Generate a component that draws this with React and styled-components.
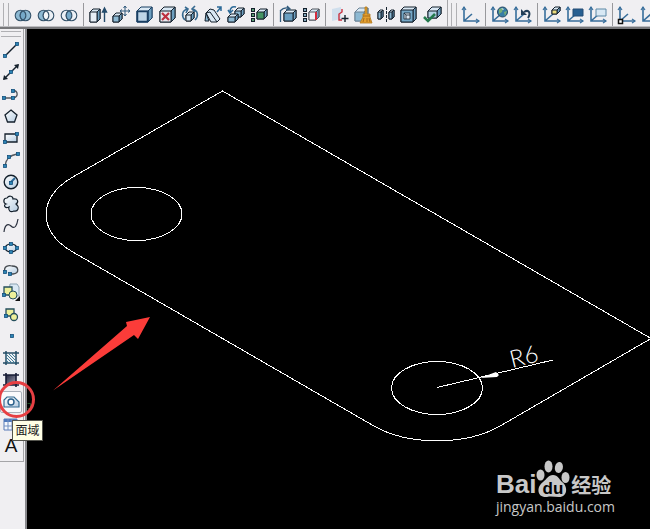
import React from 'react'
import styled, { createGlobalStyle } from 'styled-components'

const ink = '#14202c'
const blue = '#2c6a98'
const steel = '#8db9d3'
const pale = '#d9e8f4'
const yellow = '#eef09a'

const Box = ({ x, y, w = 9, h = 9, d = 4, front = steel, line = ink }) => (
    <g stroke={line} strokeWidth="1" strokeLinejoin="round">
        <path d={`M${x} ${y + d}l${d}-${d}h${w}v${h}l-${d} ${d}h-${w}z`} fill={pale} />
        <path d={`M${x + w} ${y + d}l${d}-${d}v${h}l-${d} ${d}z`} fill="#6d9fc0" />
        <path d={`M${x} ${y + d}h${w}v${h}h-${w}z`} fill={front} />
    </g>
)

const Dot = ({ x, y }) => <rect x={x - 1.5} y={y - 1.5} width="3" height="3" fill="#2d84b4" stroke="#14507c" strokeWidth=".8" />

const Axes = ({ x = 3, y = 16 }) => (
    <g fill="none" stroke="#386e9b" strokeWidth="1.6">
        <path d={`M${x} 2V${y}H18M${x} ${y}l8-7`} />
        <path d={`M${x - 2} 5l2-3 2 3M15 ${y - 2}l3 2-3 2`} strokeWidth="1.2" />
    </g>
)

const Squares = ({ color }) => (
    <g fill={color} stroke={ink}>
        <rect x="2.5" y="3.5" width="3" height="3" />
        <rect x="2.5" y="8.5" width="3" height="3" />
        <rect x="2.5" y="13.5" width="3" height="3" />
    </g>
)

const Rings = ({ left, right, middle }) => (
    <g stroke="#35536b" strokeWidth="1.1">
        <circle cx="7.5" cy="10.5" r="5.3" fill={left} />
        <circle cx="12.5" cy="10.5" r="5.3" fill={right} />
        <path d="M10 5.8a5.3 5.3 0 0 1 0 9.4a5.3 5.3 0 0 1 0-9.4z" fill={middle} />
    </g>
)

const icons = {
    union: <Rings left={steel} right={steel} middle="#75a9c9" />,
    subtract: <Rings left={steel} right="#edf1f6" middle="#f4f7fa" />,
    intersect: <Rings left="#edf1f6" right="#edf1f6" middle="#75a9c9" />,
    extrude: <><Box x={2} y={4} w={7} h={10} d={3} front="#e6eef6" /><path d="M16.5 17V4M14.5 7l2-4 2 4z" fill={blue} stroke="#244b6b" strokeWidth="1.4" /></>,
    moveFaces: <><Box x={2} y={8} w={6} h={6} d={3} /><path d="M14 1v10M9 6h10M12.5 3L14 1l1.5 2M12.5 9l1.5 2 1.5-2M11 4.5L9 6l2 1.5M17 4.5L19 6l-2 1.5" fill="none" stroke="#315b7d" /></>,
    offset: <><Box x={3} y={2} w={11} h={11} d={4} front="#386b91" line="#193f63" /><path d="M3.5 6.5h10v10h-10z" fill="#bed6e8" stroke="#193f63" strokeWidth="1.5" /></>,
    remove: <><Box x={3} y={2} w={11} h={11} d={4} front="#e7e9ef" /><path d="M5 8l7 7M12 8l-7 7" stroke="#bd2f3f" strokeWidth="2.2" /></>,
    rotate: <><Box x={6} y={7} w={5} h={6} d={3} front={pale} /><path d="M5 15C1 11 2 5 8 4M5 2l3 2-2 4M15 15c4-4 3-10-3-11M15 1l-3 3 3 3" fill="none" stroke="#386b91" strokeWidth="1.6" /></>,
    taper: <><path d="M3 8l4-4 4 1 6 9-3 3h-6z" fill={pale} stroke={ink} /><path d="M3 8l4-1 7 10" fill="none" stroke={ink} /><path d="M3 8l3 8H2z" fill={steel} stroke={ink} /><path d="M14 7l4-5M14 2h4v4" fill="none" stroke={blue} strokeWidth="1.5" /></>,
    copyFaces: <><Box x={9} y={3} w={6} h={6} d={3} /><Box x={2} y={9} w={7} h={5} d={3} /><path d="M10 2C6 1 4 3 4 7M2 5l2 3 3-3" fill="none" stroke={blue} strokeWidth="1.5" /></>,
    colorFaces: <><Squares color="#5a9e72" /><Box x={8} y={4} w={7} h={7} d={3} front="#449463" /></>,
    copyEdges: <><Box x={6} y={5} w={9} h={8} d={3} front="#6a9fc1" /><path d="M2.5 17V5M2 6q5-5 10-2M9 1l3 3-4 1" fill="none" stroke="#315b7d" strokeWidth="1.3" /></>,
    colorEdges: <><Squares color="#83a8bd" /><Box x={8} y={4} w={7} h={8} d={3} front="#eef0f5" line="#51545d" /><path d="M15 7v8" stroke="#d52b3d" strokeWidth="2" /></>,
    imprint: <><path d="M2 4l9-2v12l-9 2z" fill="#d0dfed" /><path d="M12 4v3l-3 2v6h3" fill="none" stroke="#c9303f" strokeWidth="1.4" /><path d="M15 10v7M11.5 13.5h7" stroke={ink} strokeWidth="1.4" /></>,
    clean: <><Box x={2} y={3} w={9} h={9} d={4} line="#6b8295" /><path d="M12 2h2v7h3v3l2 6H7l3-6V9h2z" fill="#e4a02f" stroke="#b07820" strokeWidth=".8" /><path d="M10 11h7M11 13l-1 4M14 13v4M16 13l1 4" stroke="#996018" strokeWidth=".8" /></>,
    separate: <><Box x={2} y={5} w={3} h={7} d={2} /><Box x={13} y={5} w={3} h={7} d={2} /><path d="M10.5 2v16" stroke={ink} strokeDasharray="3 1" /></>,
    shell: <><Box x={2} y={2} w={12} h={12} d={3} front="#75a7c6" /><path d="M5 8h6v6H5zM5 8l2 2v4M7 10h4" fill={pale} stroke={ink} strokeWidth=".8" /></>,
    check: <><Box x={6} y={2} w={9} h={7} d={4} front="#b4d2e3" /><path d="M2 12l4 4 7-7" fill="none" stroke="#24794d" strokeWidth="2.6" /></>,
    ucs: <Axes />,
    world: <><Axes /><circle cx="12.5" cy="7" r="5" fill="#377da5" stroke="#254863" /><path d="M9 4l4-1-1 4-3 2zM14 7l3-1-2 5z" fill="#78ae74" /><path d="M11 3l3 1-1 1z" fill="#e4f1f5" /></>,
    previous: <><Axes /><path d="M15 13c3-5 1-9-4-6" fill="none" stroke="#223e58" strokeWidth="2" /><path d="M8 4v6h6z" fill="#223e58" /></>,
    face: <><Axes /><Box x={10} y={2} w={5} h={4} d={3} front="#e9dc7e" /></>,
    object: <><Axes /><path d="M8 4h10v7H8z" fill="#285f91" stroke="#244d74" /></>,
    view: <><Axes /><path d="M8 4h10v7H8z" fill="#d8e8f4" stroke="#5d88a6" /></>,
    origin: <><Axes /><path d="M1.5 14.5h4v4h-4z" fill="#fff" stroke="#111" strokeWidth="1.5" /></>,
    line: <><path d="M4 16L16 4" stroke={ink} strokeWidth="1.4" /><Dot x={4} y={16} /><Dot x={16} y={4} /></>,
    xline: <><path d="M3 17L17 3" stroke={ink} strokeWidth="1.4" /><path d="M2 18l1-5 4 4zM18 2l-5 1 4 4z" fill={ink} /><Dot x={10} y={10} /></>,
    polyline: <><path d="M3 14h9q5-1 4-5-1-3-4-2" fill="none" stroke="#53585f" strokeWidth="1.4" /><Dot x={3} y={14} /><Dot x={12} y={14} /><Dot x={12} y={7} /></>,
    polygon: <path d="M10 4l6 5-2.5 7h-7L4 9z" fill="url(#shade)" stroke={ink} strokeWidth="1.3" />,
    rectangle: <><path d="M4 6h12v8H4z" fill="url(#shade)" stroke={ink} strokeWidth="1.3" /><Dot x={4} y={14} /><Dot x={16} y={6} /></>,
    arc: <><path d="M4 16Q5 6 16 4" fill="none" stroke="#53585f" strokeWidth="1.4" /><Dot x={4} y={16} /><Dot x={8} y={7} /><Dot x={17} y={4} /></>,
    circle: <><circle cx="10" cy="10" r="6.8" fill="url(#shade)" stroke={ink} strokeWidth="1.4" /><path d="M10 10l4-4" stroke={blue} strokeWidth="2" /><Dot x={10} y={11} /></>,
    cloud: <path d="M5 10C2 9 2 4 6 4C8 1 12 2 12 5C17 4 18 8 15 10C19 13 17 18 13 17C9 19 7 16 8 13C4 15 2 11 5 10z" fill="url(#shade)" stroke={ink} strokeWidth="1.2" />,
    spline: <path d="M3 16C4 7 8 8 10 10C14 14 16 9 17 3" fill="none" stroke="#292f3d" strokeWidth="1.2" />,
    ellipse: <><ellipse cx="10" cy="10" rx="6" ry="4" fill="url(#shade)" stroke={ink} strokeWidth="1.2" /><Dot x={4} y={10} /><Dot x={16} y={10} /><Dot x={10} y={6} /><Dot x={10} y={14} /></>,
    ellipseArc: <><path d="M4 12C2 6 8 5 11 6C18 6 19 13 12 14H9" fill="url(#shade)" stroke="#454a50" strokeWidth="1.3" /><Dot x={4} y={12} /><Dot x={9} y={14} /></>,
    insert: <><path d="M9 2h7l2 3v9H8z" fill={pale} stroke="#8ba2b2" /><path d="M3 5h8v8H3z" fill={yellow} stroke="#244e5c" strokeWidth="1.3" /><circle cx="12" cy="13" r="4" fill={yellow} stroke="#244e5c" /><Dot x={3} y={13} /><path d="M19 14v5h-5z" fill="#111" /></>,
    block: <><path d="M5 5h8v7H5z" fill={yellow} stroke="#244e5c" strokeWidth="1.3" /><circle cx="13" cy="13" r="3.5" fill={yellow} stroke="#244e5c" strokeWidth="1.3" /><Dot x={5} y={12} /></>,
    point: <Dot x={11} y={10} />,
    hatch: <><path d="M5 3v14M15 3v14M2 5h16M2 15h16" stroke="#244e67" strokeWidth="1.5" /><path d="M5 6l9 9M8 6l6 6M5 9l6 6M5 12l3 3M11 6l3 3" stroke="#3e809c" /></>,
    gradient: <><path d="M5 5h10v10H5z" fill="url(#dark)" /><path d="M5 3v14M15 3v14M2 5h16M2 15h16" stroke="#171c35" strokeWidth="1.6" /></>,
    region: <><path d="M3 15V8l3-3h7l5 5v5z" fill="url(#shade)" stroke="#326b91" strokeWidth="1.2" /><circle cx="10" cy="10" r="3" fill="#fff" stroke="#285e89" strokeWidth="1.4" /></>,
    table: <><path d="M3 5h13v11H3z" fill="#f5f8fd" stroke="#587bb7" /><path d="M3 5h13v3H3z" fill="#507abc" /><path d="M7 5v11M11 5v11M3 12h13" stroke="#7291c2" /></>,
}

const modify = [
    ['union', 'subtract', 'intersect'],
    ['extrude', 'moveFaces', 'offset', 'remove', 'rotate', 'taper', 'copyFaces', 'colorFaces'],
    ['copyEdges', 'colorEdges'],
    ['imprint', 'clean', 'separate', 'shell', 'check'],
]
const ucs = [['ucs'], ['world', 'previous'], ['face', 'object', 'view'], ['origin', 'ucs']]
const drawTools = ['line', 'xline', 'polyline', 'polygon', 'rectangle', 'arc', 'circle', 'cloud', 'spline', 'ellipse', 'ellipseArc', 'insert', 'block', 'point', 'hatch', 'gradient', 'region', 'table']

const Icon = ({ name }) => <Glyph width="20" height="20" viewBox="0 0 20 20" aria-hidden="true">{icons[name]}</Glyph>

const ToolGroups = ({ groups }) => groups.map((group, i) => (
    <Group key={i} $divided={i > 0}>
        {group.map(name => <ToolButton key={name} type="button" aria-label={name}><Icon name={name} /></ToolButton>)}
    </Group>
))

function Drawing() {
    return (
        <Sheet viewBox="27 29 623 500" preserveAspectRatio="xMinYMin slice">
            <g fill="none" stroke="#fff" shapeRendering="crispEdges">
                <path d="M222.5 91L72 177.500A91 53 0 0 0 72 251.500L373 425.500A91 53 0 0 0 501 425.500L651 338.500Z" />
                <ellipse cx="136.5" cy="214" rx="45.5" ry="26.5" />
                <ellipse cx="437" cy="388" rx="45.5" ry="26.5" />
                <path d="M437 387.500L553 360" />
            </g>
            <path d="M27.5 403.500h3v5h-3" fill="none" stroke="#1c4a22" />
            <path d="M480 378l16-6 3 3-2 2z" fill="#fff" />
            <DimText x="512" y="368" transform="rotate(-14 512 368)">R6</DimText>
            <path d="M53 390.500L127 326l-1-4 24-5-12 22-4-4z" fill="#fb3c39" />
        </Sheet>
    )
}

function Watermark() {
    return (
        <Mark>
            <Brand>
                <BrandName>Bai</BrandName>
                <svg width="34" height="38" viewBox="0 0 34 38">
                    <g fill="#c8c8c8">
                        <ellipse cx="4.5" cy="15" rx="4" ry="5.5" />
                        <ellipse cx="12.5" cy="6.5" rx="4" ry="6" />
                        <ellipse cx="23" cy="7.5" rx="4" ry="5.5" transform="rotate(12 23 7)" />
                        <ellipse cx="29.5" cy="17.5" rx="4" ry="5.5" />
                        <path d="M17 15c5 0 6 4 9 7c6 4 6 15-3 15c-4 0-8-1-12 0C1 38 0 27 7 22c4-3 5-7 10-7z" />
                    </g>
                    <PawText x="17" y="34" textAnchor="middle">du</PawText>
                </svg>
                <BrandCjk>经验</BrandCjk>
            </Brand>
            <Site>jingyan.baidu.com</Site>
        </Mark>
    )
}

function App() {
    return (
        <Window>
            <GlobalStyle />
            <Defs width="0" height="0" aria-hidden="true">
                <linearGradient id="shade" x2="1" y2="1"><stop stopColor="#fff" /><stop offset="1" stopColor="#b5cce1" /></linearGradient>
                <linearGradient id="dark" x2="1" y2="1"><stop stopColor="#22233c" /><stop offset="1" stopColor="#a3a5b5" /></linearGradient>
            </Defs>
            <TopBar>
                <ToolStrip><Grip /><ToolGroups groups={modify} /></ToolStrip>
                <ToolStrip><Grip /><ToolGroups groups={ucs} /></ToolStrip>
            </TopBar>
            <Body>
                <SideBar>
                    <SideTools>
                        <Grip $flat />
                        {drawTools.map(name => (
                            <SideButton key={name} type="button" aria-label={name} $active={name === 'region'}>
                                <Icon name={name} />
                                {name === 'region' && <>
                                    <Highlight />
                                    <Tip role="tooltip">面域</Tip>
                                </>}
                            </SideButton>
                        ))}
                        <SideButton type="button">A</SideButton>
                    </SideTools>
                </SideBar>
                <Canvas>
                    <Drawing />
                    <Watermark />
                </Canvas>
            </Body>
        </Window>
    )
}

export default App

const GlobalStyle = createGlobalStyle`
* {
    box-sizing: border-box;
}
body {
    margin: 0;
    overflow: hidden;
    font-family: "Liberation Sans", "Noto Sans CJK SC", sans-serif;
}
`

const Window = styled.div`
display: flex;
flex-direction: column;
height: 100vh;
background: #f0eff2;
`

const Defs = styled.svg`
position: absolute;
`

const Glyph = styled.svg`
flex: none;
`

const TopBar = styled.header`
display: flex;
flex: none;
height: 29px;
overflow: hidden;
border-bottom: 2px solid #77777a;
`

const ToolStrip = styled.div`
display: flex;
flex: none;
align-items: center;
height: 27px;
padding: 3px 4px 0 3px;
border-right: 1px solid #a5a5a8;
border-bottom: 1px solid #bcbcc0;
`

const Grip = styled.span`
flex: none;
width: ${p => p.$flat ? '20px' : '6px'};
height: ${p => p.$flat ? '6px' : '23px'};
margin: ${p => p.$flat ? '0 0 2px 1px' : '0 2px 0 0'};
border: solid #b0b0b4;
border-width: ${p => p.$flat ? '1px 0' : '0 1px'};
`

const Group = styled.div`
display: flex;
margin-left: ${p => p.$divided ? '3px' : '0'};
padding-left: ${p => p.$divided ? '2px' : '0'};
border-left: ${p => p.$divided ? '1px solid #98989c' : '0'};
`

const ToolButton = styled.button`
display: flex;
align-items: center;
justify-content: center;
width: 23px;
height: 23px;
padding: 0;
border: 0;
background: none;
`

const Body = styled.div`
display: flex;
flex: 1;
min-height: 0;
`

const SideBar = styled.aside`
position: relative;
z-index: 1;
flex: none;
width: 27px;
border-right: 2px solid #88888c;
`

const SideTools = styled.div`
display: flex;
flex-direction: column;
width: 24px;
padding: 2px 1px 4px 0;
border: solid #a5a5a8;
border-width: 0 1px 1px 0;
`

const SideButton = styled.button`
position: relative;
display: flex;
align-items: center;
justify-content: center;
width: 22px;
height: 22px;
padding: 0;
border: ${p => p.$active ? '1px solid #a9b0ba' : '0'};
border-radius: 2px;
background: ${p => p.$active ? '#fafafc' : 'none'};
color: #111;
font: 19px "Liberation Sans", sans-serif;
z-index: ${p => p.$active ? 1 : 0};
`

const Highlight = styled.span`
position: absolute;
left: -3px;
top: -11px;
width: 37px;
height: 37px;
border: 3px solid #e73f43;
border-radius: 50%;
`

const Tip = styled.span`
position: absolute;
left: 11px;
top: 28px;
z-index: 1;
width: 31px;
height: 21px;
border: 1px solid #55554e;
background: #ffffe5;
color: #222;
font: 12px/18px "Noto Sans CJK SC", sans-serif;
text-align: center;
white-space: nowrap;
`

const Canvas = styled.main`
position: relative;
flex: 1;
min-width: 0;
background: #000;
`

const Sheet = styled.svg`
display: block;
width: 100%;
height: 100%;
`

const DimText = styled.text`
fill: #fff;
font: 300 24px Lato, sans-serif;
`

const Mark = styled.div`
position: absolute;
right: 35px;
bottom: 13px;
color: #c8c8c8;
`

const Brand = styled.div`
display: flex;
align-items: flex-end;
height: 38px;
`

const BrandName = styled.span`
font: 700 26px/28px "Liberation Sans", sans-serif;
`

const PawText = styled.text`
fill: #000;
font: 700 17px "Liberation Sans", sans-serif;
`

const BrandCjk = styled.span`
margin-left: 1px;
font: 700 20px/26px "Noto Sans CJK SC", sans-serif;
`

const Site = styled.div`
font: 14px/18px "Open Sans", sans-serif;
`
